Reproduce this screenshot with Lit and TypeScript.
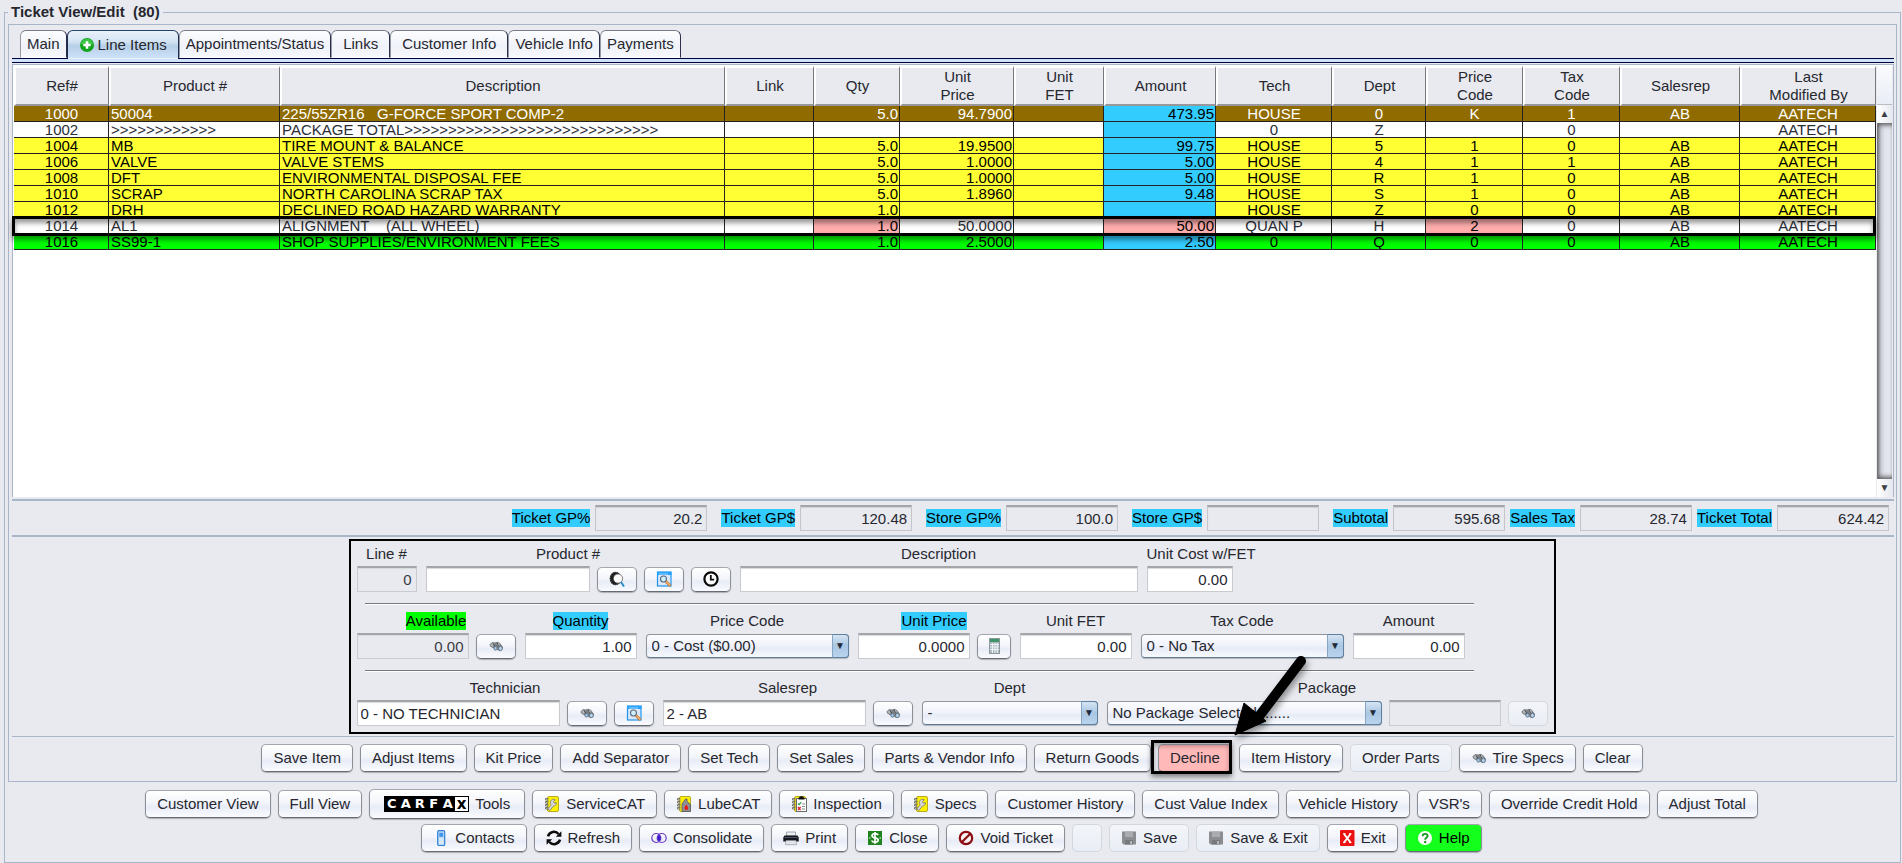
import { LitElement, html, css, svg, nothing, type TemplateResult } from "lit";
import { customElement, property, state } from "lit/decorators.js";
import { classMap } from "lit/directives/class-map.js";
import { styleMap } from "lit/directives/style-map.js";

type Align = "center" | "left" | "right";
interface Column { key: string; lines: string[]; width: number; align: Align; }
interface LineItem { tone: string; cells: string[]; flagged?: number[]; selected?: boolean; }
interface Action { label: string; icon?: string; tone?: string; disabled?: boolean; }

const COLUMNS: Column[] = [
  { key: "ref", lines: ["Ref#"], width: 95, align: "center" },
  { key: "product", lines: ["Product #"], width: 171, align: "left" },
  { key: "description", lines: ["Description"], width: 445, align: "left" },
  { key: "link", lines: ["Link"], width: 89, align: "center" },
  { key: "qty", lines: ["Qty"], width: 86, align: "right" },
  { key: "price", lines: ["Unit", "Price"], width: 114, align: "right" },
  { key: "fet", lines: ["Unit", "FET"], width: 90, align: "right" },
  { key: "amount", lines: ["Amount"], width: 112, align: "right" },
  { key: "tech", lines: ["Tech"], width: 116, align: "center" },
  { key: "dept", lines: ["Dept"], width: 94, align: "center" },
  { key: "pcode", lines: ["Price", "Code"], width: 97, align: "center" },
  { key: "tcode", lines: ["Tax", "Code"], width: 97, align: "center" },
  { key: "salesrep", lines: ["Salesrep"], width: 120, align: "center" },
  { key: "modified", lines: ["Last", "Modified By"], width: 136, align: "center" },
];
const TOTAL_WIDTH = COLUMNS.reduce((sum, c) => sum + c.width, 0);

const ITEMS: LineItem[] = [
  { tone: "brown", cells: ["1000", "50004", "225/55ZR16   G-FORCE SPORT COMP-2", "", "5.0", "94.7900", "", "473.95", "HOUSE", "0", "K", "1", "AB", "AATECH"] },
  { tone: "plain", cells: ["1002", ">".repeat(12), "PACKAGE TOTAL" + ">".repeat(29), "", "", "", "", "", "0", "Z", "", "0", "", "AATECH"] },
  { tone: "yellow", cells: ["1004", "MB", "TIRE MOUNT & BALANCE", "", "5.0", "19.9500", "", "99.75", "HOUSE", "5", "1", "0", "AB", "AATECH"] },
  { tone: "yellow", cells: ["1006", "VALVE", "VALVE STEMS", "", "5.0", "1.0000", "", "5.00", "HOUSE", "4", "1", "1", "AB", "AATECH"] },
  { tone: "yellow", cells: ["1008", "DFT", "ENVIRONMENTAL DISPOSAL FEE", "", "5.0", "1.0000", "", "5.00", "HOUSE", "R", "1", "0", "AB", "AATECH"] },
  { tone: "yellow", cells: ["1010", "SCRAP", "NORTH CAROLINA SCRAP TAX", "", "5.0", "1.8960", "", "9.48", "HOUSE", "S", "1", "0", "AB", "AATECH"] },
  { tone: "yellow", cells: ["1012", "DRH", "DECLINED ROAD HAZARD WARRANTY", "", "1.0", "", "", "", "HOUSE", "Z", "0", "0", "AB", "AATECH"] },
  { tone: "plain", selected: true, flagged: [4, 7, 10], cells: ["1014", "AL1", "ALIGNMENT    (ALL WHEEL)", "", "1.0", "50.0000", "", "50.00", "QUAN P", "H", "2", "0", "AB", "AATECH"] },
  { tone: "green", cells: ["1016", "SS99-1", "SHOP SUPPLIES/ENVIRONMENT FEES", "", "1.0", "2.5000", "", "2.50", "0", "Q", "0", "0", "AB", "AATECH"] },
];

const TOTALS = [
  { label: "Ticket GP%", value: "20.2" },
  { label: "Ticket GP$", value: "120.48" },
  { label: "Store GP%", value: "100.0" },
  { label: "Store GP$", value: "" },
  { label: "Subtotal", value: "595.68" },
  { label: "Sales Tax", value: "28.74", tight: true },
  { label: "Ticket Total", value: "624.42", tight: true },
];

const TABS = [
  { label: "Main" },
  { label: "Line Items", icon: "plus", roomy: true },
  { label: "Appointments/Status" },
  { label: "Links", roomy: true },
  { label: "Customer Info", roomy: true },
  { label: "Vehicle Info" },
  { label: "Payments" },
];

const ITEM_ACTIONS: Action[] = [
  { label: "Save Item" }, { label: "Adjust Items" }, { label: "Kit Price" },
  { label: "Add Separator" }, { label: "Set Tech" }, { label: "Set Sales" },
  { label: "Parts & Vendor Info" }, { label: "Return Goods" },
  { label: "Decline", tone: "decline" }, { label: "Item History" },
  { label: "Order Parts", disabled: true },
  { label: "Tire Specs", icon: "binoculars" }, { label: "Clear" },
];
const TICKET_ACTIONS: Action[] = [
  { label: "Customer View" }, { label: "Full View" },
  { label: "Tools", tone: "carfax" },
  { label: "ServiceCAT", icon: "wrench" }, { label: "LubeCAT", icon: "lube" },
  { label: "Inspection", icon: "checklist" }, { label: "Specs", icon: "wrench" },
  { label: "Customer History" }, { label: "Cust Value Index" },
  { label: "Vehicle History" }, { label: "VSR's" },
  { label: "Override Credit Hold" }, { label: "Adjust Total" },
];
const WINDOW_ACTIONS: Action[] = [
  { label: "Contacts", icon: "phone" }, { label: "Refresh", icon: "refresh" },
  { label: "Consolidate", icon: "rings" }, { label: "Print", icon: "printer" },
  { label: "Close", icon: "dollar" }, { label: "Void Ticket", icon: "void" },
  { label: "", disabled: true },
  { label: "Save", icon: "disk", disabled: true },
  { label: "Save & Exit", icon: "disk", disabled: true },
  { label: "Exit", icon: "exit" }, { label: "Help", icon: "help", tone: "help" },
];

const notebook = svg`
  <rect x="3.5" y="0.5" width="11" height="15" rx="1.5" fill="#fff200" stroke="#b8ac1c"/>
  <g fill="none" stroke="#77776c" stroke-width="1">
    <path d="M4.500 2.500h-3v1.500h3M4.500 5.500h-3v1.500h3M4.500 8.500h-3v1.500h3M4.500 11.500h-3v1.500h3"/>
  </g>`;

const ICONS: Record<string, TemplateResult> = {
  plus: svg`
    <circle cx="8" cy="8" r="7" fill="#12a51c"/>
    <path d="M8 1.800a6.200 6.200 0 0 1 6.200 5.400H1.800A6.200 6.200 0 0 1 8 1.800z" fill="#3cc545"/>
    <path d="M8 4.300v7.400M4.300 8h7.400" stroke="#fff" stroke-width="2.600"/>`,
  tire: svg`
    <ellipse cx="6.500" cy="7.500" rx="5.800" ry="6.800" fill="#1c1c1c"/>
    <ellipse cx="6.500" cy="7.500" rx="5" ry="6" fill="none" stroke="#777" stroke-width="1" stroke-dasharray="1 1.200"/>
    <circle cx="9" cy="7.600" r="4.600" fill="#fff" stroke="#555" stroke-width="0.800"/>
    <path d="M12 11l3 4.500" stroke="#2a8fc4" stroke-width="2"/>`,
  lookup: svg`
    <rect x="1.500" y="1" width="13.500" height="14" fill="#dbe6f6" stroke="#1e96f0" stroke-width="1.200"/>
    <path d="M1 1h14.500v3H1z" fill="#27a2ff"/><path d="M3 3h9" stroke="#9ed6ff" stroke-width="1"/>
    <circle cx="7.500" cy="8" r="3" fill="#cdf0fb" stroke="#5a6a80" stroke-width="1.100"/>
    <path d="M10 10.500l4.500 4.500" stroke="#c07a3c" stroke-width="2.600"/>
    <path d="M10.400 10.700l3.800 3.800" stroke="#f6b46c" stroke-width="1.200"/>`,
  clock: svg`
    <circle cx="8" cy="8" r="6.600" fill="#fff" stroke="#0a0a0a" stroke-width="2.200"/>
    <path d="M7.800 4v4.700h3.400" fill="none" stroke="#0a0a0a" stroke-width="1.800"/>`,
  binoculars: svg`
    <path d="M1.500 6.500l2.800-2.500 2.700.4 2.500-.6 2.500 1.200 3 4-.6 2.800-3 1.200-2-1-1-2.200-2.200.6-2-.6-2.200-1.500z" fill="#7c8186"/>
    <path d="M2.400 6.700l2.400-1.700 1.600 2-2 2zM8.300 5.400l2.400-.3 1.700 2-2.400.8z" fill="#b4b8bb"/>
    <path d="M5 5.600l2.400 3.600M9 4.800l1.600 3.400" stroke="#3a3d40" stroke-width="0.900"/>
    <ellipse cx="7.500" cy="10.200" rx="1.700" ry="2" fill="#9fc4e6" stroke="#4f5c68" stroke-width="0.700"/>
    <ellipse cx="12.400" cy="10.500" rx="1.900" ry="2.200" fill="#b3d3f0" stroke="#4f5c68" stroke-width="0.700"/>`,
  calculator: svg`
    <rect x="3.500" y="0.500" width="10" height="15" fill="#aeb9c0" stroke="#8c979e"/>
    <rect x="4" y="1" width="9" height="3" fill="#3f9468"/>
    <path d="M4 6.500h9M4 9h9M4 11.500h9M6.500 5v10M9 5v10M11.300 5v10" stroke="#f4f7fa" stroke-width="0.900"/>`,
  wrench: svg`${notebook}
    <path d="M6.500 5.500a3 3 0 0 1 4.800-1.600l-1.800 1.600.6 1.600 2.300-.4a3 3 0 0 1-3 3.400l-3.600 4.400-2-1.600 3.400-4a3 3 0 0 1-.7-3.400z" fill="#d8d8d8" stroke="#77776c" stroke-width="0.800"/>`,
  lube: svg`${notebook}
    <path d="M6 15.500V8l3.500-5h1.500v2.500l3.500 3v7z" fill="#8f9094" stroke="#55565a" stroke-width="0.800"/>
    <path d="M10.300 8.500c1.200 1.800 1.800 2.700 1.800 3.700a1.800 1.800 0 0 1-3.600 0c0-1 .6-1.900 1.800-3.700z" fill="#f01414"/>`,
  checklist: svg`${notebook}
    <rect x="5.500" y="2.500" width="10" height="13" fill="#fff" stroke="#6b6b6b"/>
    <path d="M7.500 3.500V2l2-1.700h2L13.500 2v1.500z" fill="#111"/>
    <path d="M7 7.500l1.200 1.200 2-2.700" fill="none" stroke="#1ea33c" stroke-width="1.200"/>
    <path d="M7 11l2.600 3M9.600 11L7 14" stroke="#e0202c" stroke-width="1.200"/>
    <path d="M11 8h3M11 10.500h3M11 13h3" stroke="#8a8a8a" stroke-width="1"/>`,
  phone: svg`
    <rect x="4.700" y="0.700" width="7" height="14.800" rx="1.200" fill="#bcd9f6" stroke="#2f7fd6" stroke-width="1.200"/>
    <rect x="6.300" y="2.800" width="3.800" height="4" fill="#3f95ec"/>
    <path d="M6 9h4.600M6 11h4.600M6 13h4.600" stroke="#eef5fc" stroke-width="1"/>`,
  refresh: svg`
    <path d="M2 6.300A6.200 6.200 0 0 1 12.600 4M14 9.700A6.200 6.200 0 0 1 3.400 12" fill="none" stroke="#0c0c0c" stroke-width="2.500"/>
    <path d="M15.400 1.200v5.600H9.800zM.6 14.800V9.200h5.600z" fill="#0c0c0c"/>`,
  rings: svg`
    <circle cx="5.300" cy="8" r="4.500" fill="none" stroke="#6b35c4" stroke-width="1.200"/>
    <circle cx="10.700" cy="8" r="4.500" fill="none" stroke="#6b35c4" stroke-width="1.200"/>
    <path d="M8 4.500a4.500 4.500 0 0 1 0 7 4.500 4.500 0 0 1 0-7z" fill="#3d1bd0"/>`,
  printer: svg`
    <path d="M3.500 2h9v4h-9z" fill="#eceef2" stroke="#8d929c" stroke-width="0.800"/>
    <path d="M1.500 5.500h13l1.200 2v4H.3v-4z" fill="#17181f"/>
    <path d="M1.500 7.500h13" stroke="#4d5366" stroke-width="1"/>
    <path d="M3 10.500h10l.6 4.200H2.400z" fill="#e3e5ea" stroke="#8d929c" stroke-width="0.600"/>`,
  dollar: svg`
    <rect x="1" y="1" width="14" height="14" fill="#1f8420"/>
    <path d="M11.200 5.200C10.600 4 9.500 3.700 8 3.700c-1.800 0-3 .7-3 2 0 3 6.200 1.300 6.200 4.400 0 1.400-1.300 2.200-3.200 2.200-1.700 0-2.800-.6-3.300-1.800M8 2v12" fill="none" stroke="#fff" stroke-width="1.700"/>
    <path d="M2 8h1.500M12.500 8H14" stroke="#fff" stroke-width="1"/>`,
  void: svg`
    <circle cx="8" cy="8" r="6.200" fill="#f7f2f4" stroke="#8d0f12" stroke-width="2.200"/>
    <path d="M12.300 3.700l-8.600 8.600" stroke="#8d0f12" stroke-width="2.200"/>`,
  disk: svg`
    <path d="M1 1.500h14v13H2.500L1 13z" fill="#8b8d91"/>
    <path d="M4 1.500h8v5.500H4z" fill="#a9abb0"/><path d="M4 10h8v4.500H4z" fill="#76787c"/>
    <path d="M9.300 11h1.600v3H9.300z" fill="#c4c6ca"/>`,
  exit: svg`
    <rect x="1" y="0" width="14.500" height="16" rx="1" fill="#ec1212"/>
    <path d="M5 4l6.500 8.500M11.500 4L5 12.500" stroke="#fff" stroke-width="2"/>
    <path d="M4 3.700h2.500M10 3.700h2.500M4 12.600h2.500M10 12.600h2.500" stroke="#fff" stroke-width="1"/>`,
  help: svg`
    <circle cx="8" cy="8" r="7" fill="#fff"/>
    <path d="M5.600 6.200c.1-1.500 1.100-2.300 2.500-2.300s2.500.8 2.500 2.100c0 1.800-2.400 1.900-2.400 3.700" fill="none" stroke="#139a1c" stroke-width="1.900"/>
    <circle cx="8.200" cy="12" r="1.200" fill="#139a1c"/>`,
};

const icon = (name: string) => html`<svg class="icon" viewBox="0 0 16 16" aria-hidden="true">${ICONS[name]}</svg>`;

const controls = css`
  * { box-sizing: border-box; }
  button, input, select { margin: 0; font: inherit; color: inherit; }
  .icon { display: block; width: 16px; height: 16px; flex: none; }
  .btn {
    position: relative;
    display: inline-flex; align-items: center; justify-content: center; gap: 6px;
    height: 28px; padding: 0 11px;
    border: 1px solid; border-color: #a3a6ae #8b8f97 #666b73;
    border-radius: 5px;
    background: linear-gradient(#ffffff, #f3f5fa 45%, #e8ecf6 60%, #fafbff);
    box-shadow: 0 1px 1px rgba(60, 66, 80, 0.35);
    white-space: nowrap;
  }
  .btn:disabled { border-color: #d3d7de; box-shadow: none; background: linear-gradient(#f3f5f9, #e9edf5); }
`;

@customElement("action-bar")
export class ActionBar extends LitElement {
  @property({ attribute: false }) actions: Action[] = [];

  static styles = [controls, css`
    :host { display: flex; flex-wrap: wrap; justify-content: center; align-items: center; gap: 5px 7px; }
    .blank { width: 30px; padding: 0; }
    .decline { background: #ffb9b9; }
    .decline::after {
      content: ""; position: absolute; inset: -5px -1px -3px -8px;
      border: 3px solid #000; pointer-events: none;
      box-shadow: 0 3px 5px rgba(0, 0, 0, 0.45), inset 0 3px 5px rgba(0, 0, 0, 0.3);
    }
    .help { background: #14ff1c; color: #000; }
    .carfax { height: 30px; padding: 0 14px; }
    .logo { display: flex; height: 16px; padding: 1px; gap: 1px; background: #000; color: #fff; font: bold 13px/14px "DejaVu Sans", sans-serif; }
    .tile { width: 13px; text-align: center; }
    .tile:last-child { background: #fff; color: #000; font-size: 15px; }
  `];

  render() {
    return this.actions.map((a) => html`
      <button type="button" ?disabled=${a.disabled} aria-label=${a.label || "Unassigned"}
        class=${classMap({ btn: true, blank: !a.label, [a.tone ?? "normal"]: true })}>
        ${a.tone === "carfax"
          ? html`<span class="logo">${[..."CARFAx"].map((c) => html`<span class="tile">${c}</span>`)}</span>`
          : nothing}
        ${a.icon ? icon(a.icon) : nothing}
        ${a.label ? html`<span>${a.label}</span>` : nothing}
      </button>`);
  }
}

@customElement("line-item-table")
export class LineItemTable extends LitElement {
  static styles = css`
    * { box-sizing: border-box; }
    :host { display: grid; grid-template-columns: minmax(0, 1fr) 17px; background: #fff; border: 1px solid #a9b5c9; border-width: 1px 1px 0; padding: 1px 0 0 1px; }
    table { width: 100%; table-layout: fixed; border-collapse: separate; border-spacing: 0; }
    th {
      height: 40px; padding: 0; font-weight: normal; line-height: 18px; color: #26272f;
      background: #e8eaef; border: solid; border-width: 2px 1px 2px 2px;
      border-color: #fff #77777c #98989c #fff;
    }
    .line { display: block; }
    td { height: 16px; padding: 0 1px 0 2px; line-height: 15px; white-space: pre; overflow: hidden; border: solid #222; border-width: 0 1px 1px 0; }
    .left { text-align: left; } .right { text-align: right; } .center { text-align: center; }
    .plain { color: #2b2d36; background: #fff; }
    .yellow { color: #000; background: #ffff33; }
    .green { color: #000; background: #00ff00; }
    .brown { color: #fff; background: #8f6b00; }
    td.amount { background: #33ccff; color: #000; }
    td.flagged { background: #ffadad; color: #000; }
    .selected { position: relative; }
    .selected td { overflow: visible; }
    .ring {
      position: absolute; inset: -2px 0 -2px -2px; border: 3px solid #000; pointer-events: none;
      box-shadow: 0 4px 5px rgba(0, 0, 0, 0.4), inset 0 4px 5px rgba(0, 0, 0, 0.4);
    }
    .rail { display: flex; flex-direction: column; padding: 0 1px; background: #e8eaef; }
    .cap { height: 39px; border-bottom: 1px solid #b9bcc4; background: linear-gradient(#fafbfe, #e9edf5); }
    .arrow { display: grid; place-items: center; height: 18px; font-size: 10px; line-height: 18px; color: #3c3d42; background: linear-gradient(90deg, #fff, #e6e9f0); }
    .track { flex: 1; background: linear-gradient(90deg, #8a8b90, #c4c7d0 20%, #dfe2ec 45%, #e9ebf3); border-left: 1px solid #777; box-shadow: inset 0 5px 5px -3px #555, inset 0 -5px 5px -3px #555; }
  `;

  render() {
    return html`
      <div>
        <table>
          <colgroup>
            ${COLUMNS.map((c) => html`<col style=${styleMap({ width: `${(c.width / TOTAL_WIDTH) * 100}%` })}>`)}
          </colgroup>
          <thead><tr>
            ${COLUMNS.map((c) => html`<th scope="col">${c.lines.map((l) => html`<span class="line">${l}</span>`)}</th>`)}
          </tr></thead>
          <tbody>
            ${ITEMS.map((item) => html`
              <tr class=${classMap({ [item.tone]: true, selected: !!item.selected })}>
                ${item.cells.map((text, i) => html`<td class=${classMap({
                  [COLUMNS[i].align]: true,
                  [COLUMNS[i].key]: true,
                  flagged: !!item.flagged?.includes(i),
                })}>${text}${item.selected && i === 0 ? html`<span class="ring"></span>` : nothing}</td>`)}
              </tr>`)}
          </tbody>
        </table>
      </div>
      <div class="rail" aria-hidden="true">
        <div class="cap"></div><div class="arrow">▲</div><div class="track"></div><div class="arrow">▼</div>
      </div>`;
  }
}

@customElement("item-editor")
export class ItemEditor extends LitElement {
  static styles = [controls, css`
    :host { position: relative; display: block; width: max-content; margin: 2px auto; padding: 4px 6px 6px; border: 2px solid #000; }
    .row { display: flex; gap: 9px; }
    .cell { display: grid; gap: 3px; }
    .caption { justify-self: center; line-height: 18px; height: 18px; white-space: nowrap; }
    .blue { background: #33ccff; color: #000; }
    .lime { background: #00ff00; color: #000; }
    .shift { margin-right: 20px; }
    .group { display: flex; align-items: center; gap: 7px; height: 26px; }
    .rule { height: 2px; margin: 11px 74px 7px 8px; background: #fff; border-top: 1px solid #77787d; }
    .field { height: 26px; padding: 0 5px 1px 3px; border: 1px solid #c9cbd0; border-top: 2px solid #a4a5a9; background: #fff; box-shadow: inset 0 1px 1px #d9dadd; border-radius: 0; }
    .num { text-align: right; padding: 0 4px 1px 0; }
    .field:disabled { background: #e8eaef; opacity: 1; color: #3a3b43; }
    .w60 { width: 60px; } .w86 { width: 86px; } .w112 { width: 112px; }
    .w164 { width: 164px; } .w203 { width: 203px; } .w398 { width: 398px; }
    .tool { width: 40px; height: 25px; padding: 0; }
    .slim { width: 34px; }
    .pick { display: grid; height: 24px; }
    .pick > * { grid-area: 1 / 1; }
    .w176 { width: 176px; } .w275 { width: 275px; }
    select { appearance: none; width: 100%; padding: 0 20px 0 5px; border: 1px solid; border-color: #8f949d #8f949d #5d7792; border-radius: 4px; background: linear-gradient(#fdfdff, #eff2fa 50%, #e6ebf5 60%, #f8faff); box-shadow: 0 1px 1px rgba(60, 66, 80, 0.3); }
    .drop { justify-self: end; width: 17px; display: grid; place-items: center; font-size: 10px; color: #1f2a38; pointer-events: none; border: 1px solid #5f7f9f; border-left-color: #87a5c3; border-radius: 0 4px 4px 0; background: linear-gradient(#d5e4f3, #a9c6e2 50%, #b9d4ee); }
    .pointer { position: absolute; left: 868px; top: 108px; width: 100px; height: 100px; overflow: visible; pointer-events: none; z-index: 1; filter: drop-shadow(2px 4px 3px rgba(0, 0, 0, 0.4)); }
  `];

  private field(id: string, width: string, value = "", opts: { text?: boolean; disabled?: boolean; label?: string } = {}) {
    return html`<input id=${id} class="field ${width} ${opts.text ? "" : "num"}" type="text" .value=${value}
      ?disabled=${opts.disabled} aria-label=${opts.label ?? nothing}>`;
  }
  private tool(name: string, label: string, extra = "", disabled = false) {
    return html`<button type="button" class="btn tool ${extra}" aria-label=${label} ?disabled=${disabled}>${icon(name)}</button>`;
  }
  private pick(id: string, width: string, value: string) {
    return html`<span class="pick ${width}"><select id=${id}><option>${value}</option></select><span class="drop" aria-hidden="true">▼</span></span>`;
  }
  private cell(id: string, label: string, tone: string, content: unknown) {
    return html`<div class="cell"><label class="caption ${tone}" for=${id}>${label}</label><div class="group">${content}</div></div>`;
  }

  render() {
    return html`
      <div class="row">
        ${this.cell("line", "Line #", "", this.field("line", "w60", "0", { disabled: true }))}
        ${this.cell("product", "Product #", "shift", html`${this.field("product", "w164", "", { text: true })}
          ${this.tool("tire", "Tire search")}${this.tool("lookup", "Product lookup")}${this.tool("clock", "Product history")}`)}
        ${this.cell("desc", "Description", "", this.field("desc", "w398", "", { text: true }))}
        ${this.cell("cost", "Unit Cost w/FET", "", this.field("cost", "w86", "0.00"))}
      </div>
      <div class="rule"></div>
      <div class="row">
        ${this.cell("avail", "Available", "lime", html`${this.field("avail", "w112", "0.00", { disabled: true })}${this.tool("binoculars", "Find stock")}`)}
        ${this.cell("qty", "Quantity", "blue", this.field("qty", "w112", "1.00"))}
        ${this.cell("pcode", "Price Code", "", this.pick("pcode", "w203", "0 - Cost ($0.00)"))}
        ${this.cell("price", "Unit Price", "blue", html`${this.field("price", "w112", "0.0000")}${this.tool("calculator", "Calculator", "slim")}`)}
        ${this.cell("fet", "Unit FET", "", this.field("fet", "w112", "0.00"))}
        ${this.cell("tax", "Tax Code", "", this.pick("tax", "w203", "0 - No Tax"))}
        ${this.cell("amount", "Amount", "", this.field("amount", "w112", "0.00"))}
      </div>
      <div class="rule"></div>
      <div class="row">
        ${this.cell("tech", "Technician", "", html`${this.field("tech", "w203", "0 - NO TECHNICIAN", { text: true })}
          ${this.tool("binoculars", "Find technician")}${this.tool("lookup", "Technician lookup")}`)}
        ${this.cell("rep", "Salesrep", "", html`${this.field("rep", "w203", "2 - AB", { text: true })}${this.tool("binoculars", "Find salesrep")}`)}
        ${this.cell("dept", "Dept", "", this.pick("dept", "w176", " -"))}
        ${this.cell("package", "Package", "", html`${this.pick("package", "w275", "No Package Selected........")}
          ${this.field("package-code", "w112", "", { disabled: true, label: "Package code" })}${this.tool("binoculars", "Find package", "", true)}`)}
      </div>
      <svg class="pointer" viewBox="0 0 100 100" aria-hidden="true">
        <path d="M82 12L38 70" stroke="#000" stroke-width="10" stroke-linecap="round"/>
        <path d="M16 86L25 54L47 72z" fill="#000" stroke="#000" stroke-linejoin="round"/>
      </svg>`;
  }
}

@customElement("app-root")
export class AppRoot extends LitElement {
  @state() private activeTab = 1;

  static styles = [controls, css`
    :host { box-sizing: border-box; display: flex; flex-direction: column; min-height: 100vh; padding: 12px 1px 0 4px; background: #e8eaef; color: #26272f; font: 15px/18px "Liberation Sans", Arial, sans-serif; }
    .frame { flex: 1; display: flex; flex-direction: column; min-width: 0; padding: 0 3px; border: 1px solid #a9b5c9; }
    .title { width: max-content; margin: -10px 0 3px; padding: 0 3px; font: inherit; font-weight: bold; white-space: pre; background: #e8eaef; }
    .panel { flex: 1; display: flex; flex-direction: column; border: 1px solid #a9b5c9; padding: 5px 2px 0 3px; }
    .tabs { position: relative; z-index: 1; display: flex; padding-left: 8px; }
    .tab { display: flex; align-items: center; gap: 3px; height: 28px; padding: 0 6px; border: 1px solid; border-color: #777b85 #2b2f4a transparent #9599a3; border-radius: 6px 6px 0 0; background: linear-gradient(#fdfdff, #eff2f9 60%, #f6f8fc); }
    .roomy { padding: 0 11px; }
    .active { background: linear-gradient(#eaf2fb, #d3e3f3 40%, #b7cfe6 55%, #cce2fa); border-color: #24456a #1d2b4d transparent; margin-bottom: -1px; height: 29px; }
    .band { height: 5px; margin-bottom: 1px; background: #cfe4fb; border: solid #00003a; border-width: 1px 0; }
    .grid { flex: 1; margin-bottom: 2px; }
    .totals { display: flex; flex-wrap: wrap; justify-content: flex-end; gap: 5px 14px; padding: 4px 5px; border: solid #a9b5c9; border-width: 2px 0; }
    .total { display: flex; align-items: center; gap: 5px; }
    .tight { margin-left: -9px; }
    .tag { background: #33ccff; color: #000; line-height: 18px; }
    .sum { width: 112px; height: 26px; padding: 0 4px 1px; text-align: right; background: #e8eaef; border: 1px solid #c4c6cb; border-top: 2px solid #a4a5a9; box-shadow: inset 0 1px 1px #d0d2d6; }
    .editor { padding-right: 2px; border-bottom: 1px solid #a9b5c9; }
    .item-actions { padding: 7px 2px 9px 0; }
    .footer { display: grid; gap: 5px; padding: 7px 2px 10px 0; }
  `];

  render() {
    return html`
      <section class="frame">
        <h1 class="title">Ticket View/Edit  (80)</h1>
        <div class="panel">
          <div class="tabs" role="tablist">
            ${TABS.map((t, i) => html`
              <button type="button" role="tab" aria-selected=${i === this.activeTab ? "true" : "false"}
                class=${classMap({ tab: true, roomy: !!t.roomy, active: i === this.activeTab })}
                @click=${() => (this.activeTab = i)}>${t.icon ? icon(t.icon) : nothing}<span>${t.label}</span></button>`)}
          </div>
          <div class="band"></div>
          <line-item-table class="grid"></line-item-table>
          <div class="totals">
            ${TOTALS.map((t, i) => html`
              <div class=${classMap({ total: true, tight: !!t.tight })}>
                <label class="tag" for="total-${i}">${t.label}</label>
                <input class="sum" id="total-${i}" type="text" readonly .value=${t.value}>
              </div>`)}
          </div>
          <div class="editor"><item-editor></item-editor></div>
          <action-bar class="item-actions" .actions=${ITEM_ACTIONS}></action-bar>
        </div>
        <div class="footer">
          <action-bar .actions=${TICKET_ACTIONS}></action-bar>
          <action-bar .actions=${WINDOW_ACTIONS}></action-bar>
        </div>
      </section>`;
  }
}
